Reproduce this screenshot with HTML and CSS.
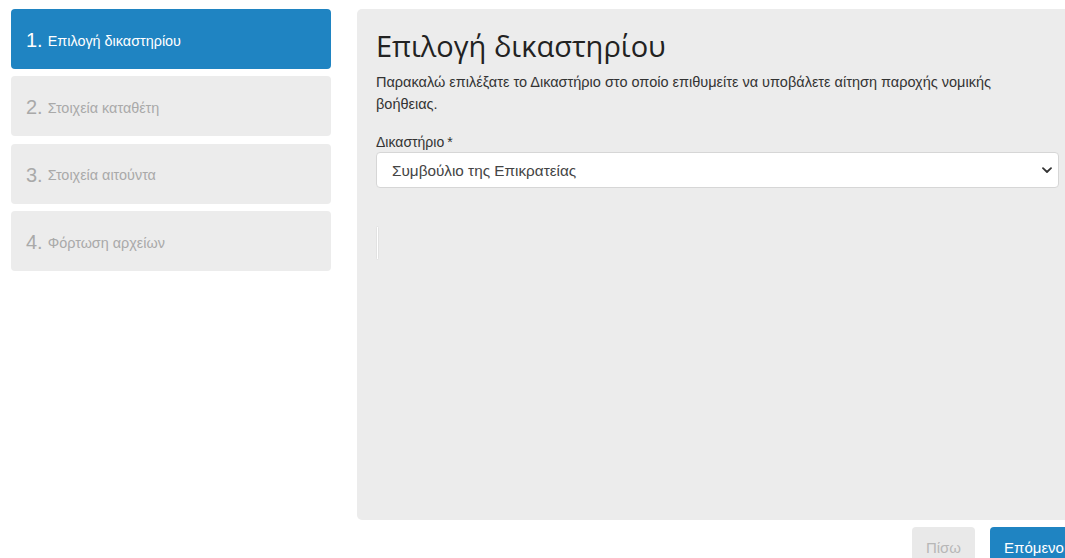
FILE: index.html
```html
<!DOCTYPE html>
<html lang="el">
<head>
<meta charset="utf-8">
<title>Επιλογή δικαστηρίου</title>
<link rel="stylesheet" href="styles.css">
</head>
<body>
<div class="wizard">
  <nav class="steps">
    <div class="step active"><span class="num">1.</span> Επιλογή δικαστηρίου</div>
    <div class="step"><span class="num">2.</span> Στοιχεία καταθέτη</div>
    <div class="step"><span class="num">3.</span> Στοιχεία αιτούντα</div>
    <div class="step"><span class="num">4.</span> Φόρτωση αρχείων</div>
  </nav>
  <main class="content">
    <section class="panel">
      <h1 class="title">Επιλογή δικαστηρίου</h1>
      <p class="intro">Παρακαλώ επιλέξατε το Δικαστήριο στο οποίο επιθυμείτε να υποβάλετε αίτηση παροχής νομικής βοήθειας.</p>
      <label class="field-label" for="court">Δικαστήριο<span class="req">*</span></label>
      <div class="select-wrap">
        <select id="court" class="select">
          <option>Συμβούλιο της Επικρατείας</option>
        </select>
        <svg class="chev" width="10" height="7" viewBox="0 0 10 7"><path d="M1 1.2 L5 5 L9 1.2" fill="none" stroke="#333" stroke-width="1.8" stroke-linecap="round" stroke-linejoin="round"/></svg>
      </div>
      <div class="frame"></div>
    </section>
    <div class="actions">
      <button class="btn btn-back" type="button">Πίσω</button>
      <button class="btn btn-next" type="button">Επόμενο</button>
    </div>
  </main>
</div>
</body>
</html>
```

FILE: styles.css
```css
html, body {
  margin: 0;
  padding: 0;
  overflow: hidden;
  background: #fff;
  font-family: "Liberation Sans", Arial, sans-serif;
  color: #333;
}

.wizard {
  display: flex;
  gap: 26px;
  padding: 9px 0 0 11px;
  width: 1100px;
}

.steps {
  width: 320px;
  flex: none;
  display: flex;
  flex-direction: column;
  gap: 7.4px;
}

.step {
  height: 60px;
  box-sizing: border-box;
  padding: 3px 15px 0;
  display: flex;
  align-items: center;
  border-radius: 4px;
  background: #ececec;
  color: #a9a9a9;
  font-size: 14.4px;
}

.step .num {
  font-size: 20px;
  margin-right: 5px;
}

.step.active {
  background: #1f84c2;
  color: #fff;
}

.content {
  width: 721px;
  flex: none;
}

.panel {
  height: 511px;
  box-sizing: border-box;
  background: #ececec;
  border-radius: 5px;
  padding: 19px 19px;
}

.title {
  margin: 0;
  font-family: "Open Sans", sans-serif;
  font-weight: 400;
  font-size: 29px;
  line-height: 36px;
  color: #222;
}

.intro {
  margin: 7px 0 0;
  font-size: 14.5px;
  line-height: 22px;
  color: #333;
  width: 640px;
}

.field-label {
  display: block;
  margin-top: 18px;
  font-size: 14px;
  line-height: 18px;
  color: #333;
}

.req {
  margin-left: 3px;
}

.select-wrap {
  position: relative;
  margin-top: 1px;
  width: 683px;
}

.select {
  -webkit-appearance: none;
  appearance: none;
  width: 100%;
  height: 36px;
  box-sizing: border-box;
  border: 1px solid #d6d6d6;
  border-radius: 4px;
  background: #fff;
  padding: 0 15px;
  font-family: "Liberation Sans", Arial, sans-serif;
  font-size: 15.3px;
  color: #444;
}

.chev {
  position: absolute;
  right: 7px;
  top: 15px;
  pointer-events: none;
}

.frame {
  margin-top: 38px;
  width: 1px;
  height: 32px;
  border: 1px solid #e2e2e2;
  border-radius: 2px;
  background: #fff;
}

.actions {
  display: flex;
  justify-content: flex-end;
  gap: 15px;
  margin-top: 7px;
}

.btn {
  height: 40px;
  border: none;
  border-radius: 4px;
  font-family: "Liberation Sans", Arial, sans-serif;
  font-size: 15px;
  padding: 0 13px;
}

.btn-back {
  width: 63px;
  background: #e9e9e9;
  color: #b7b7b7;
}

.btn-next {
  width: 88px;
  background: #1f84c2;
  color: #fff;
}
```
